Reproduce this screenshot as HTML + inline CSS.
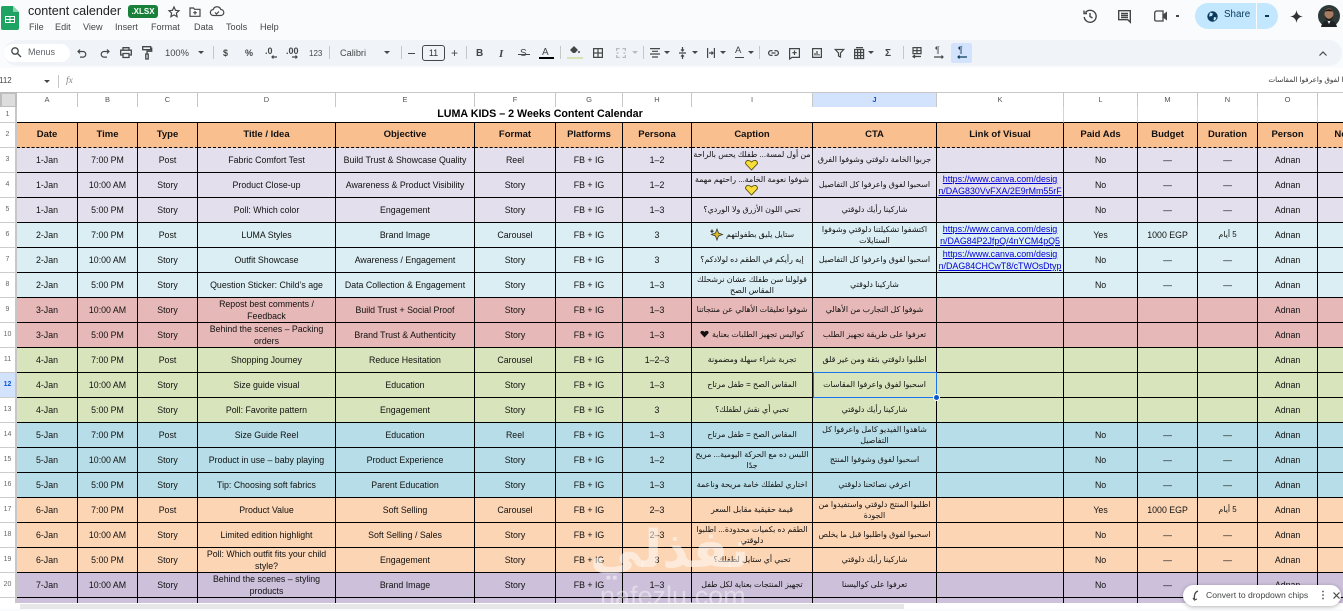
<!DOCTYPE html>
<html lang="en"><head><meta charset="utf-8"><title>content calender</title>
<style>
*{box-sizing:border-box}
html,body{margin:0;padding:0;width:1343px;height:609px;overflow:hidden;background:#f9fbfd;font-family:"Liberation Sans","Noto Sans CJK SC",sans-serif;color:#000}
.a{position:absolute}
.t{position:absolute;white-space:nowrap;color:#444746}
svg{position:absolute;overflow:visible}
svg.i{fill:none;stroke:#444746;stroke-width:1.2}
.sep{position:absolute;top:46px;width:1px;height:13px;background:#c7c7c7}
.ar{position:absolute;top:51px;width:0;height:0;border-left:3px solid transparent;border-right:3px solid transparent;border-top:3px solid #444746}
.ch{position:absolute;top:92px;height:16px;background:#fff;border-right:1px solid #c7c7c7;border-bottom:1px solid #c7c7c7;border-top:1px solid #c7c7c7;font-size:7.5px;color:#555;text-align:center;line-height:14px}
.rh{position:absolute;left:0;width:17px;height:25px;background:#fff;border-bottom:1px solid #ccc;border-right:2px solid #c7c7c7;font-size:7px;color:#666;text-align:center;line-height:24px}
#grid{position:absolute;left:17px;top:107px;width:1326px;height:496px;overflow:hidden;background:#fff}
table{border-collapse:separate;border-spacing:0;table-layout:fixed;width:1341px;font-family:"Liberation Sans","Noto Sans CJK SC",sans-serif}
td{padding:0;height:25px;border-right:1px solid #000;border-bottom:1px solid #000;text-align:center;vertical-align:middle;font-size:8.8px;line-height:12px;color:#111;overflow:hidden;white-space:nowrap}
tr.h td{background:#fabf8f;font-weight:bold;font-size:9.5px;border-bottom:1px dashed #000;color:#111}
tr.r1 td{height:16px;background:#fff;border-right:1px solid #d4d4d4;border-bottom:1px solid #000;line-height:15px}
td.ttl{font-weight:bold;font-size:10.7px;color:#000;border-right:1px solid #d4d4d4}
tr.l td{background:#e4dfec} tr.c td{background:#daeef3} tr.p td{background:#e6b8b7}
tr.g td{background:#d8e4bc} tr.b td{background:#b7dee8} tr.o td{background:#fcd5b4} tr.v td{background:#ccc0da}
td.ar2{direction:rtl;font-size:7.9px;line-height:11.5px;font-family:"Liberation Sans","DejaVu Sans",sans-serif}
td.lk{color:#0000d4;text-decoration:underline;font-size:8.9px;line-height:12px}
.em{display:inline-block;width:14px;height:10px;vertical-align:-2px;position:relative}
</style></head><body>

<!-- top bar -->
<svg style="left:1px;top:6px" width="18" height="24" viewBox="0 0 18 24"><path d="M2 0h10l6 6v16a2 2 0 0 1-2 2H2a2 2 0 0 1-2-2V2a2 2 0 0 1 2-2z" fill="#1ea362"/><path d="M12 0l6 6h-6z" fill="#8ed1b1"/><path d="M4 10h10v7H4z M5 11v2h3.5v-2z M9.5 11v2H13v-2z M5 14v2h3.5v-2z M9.5 14v2H13v-2z" fill="#fff" fill-rule="evenodd"/></svg>
<div class="t" style="left:28px;top:4px;font-size:12.6px;line-height:15px;color:#1f1f1f">content calender</div>
<div class="a" style="left:128px;top:5px;width:30px;height:13px;border-radius:3px;background:#188038;color:#fff;font-size:8px;font-weight:bold;text-align:center;line-height:14px">.XLSX</div>
<svg class="i" style="left:168px;top:6px" width="12" height="12" viewBox="0 0 12 12"><path d="M6 1l1.5 3.3 3.5.4-2.6 2.4.7 3.6L6 8.9l-3.1 1.8.7-3.6L1 4.7l3.5-.4z"/></svg>
<svg class="i" style="left:189px;top:7px" width="12" height="10" viewBox="0 0 12 10"><path d="M1 1h3.500l1 1.300H11v7H1z M6 4v3.500 M4.300 5.700h3.500"/></svg>
<svg class="i" style="left:210px;top:6px" width="14" height="11" viewBox="0 0 14 11"><path d="M3.500 9.500a3 3 0 0 1-.3-6 4 4 0 0 1 7.600 0 3 3 0 0 1 0 6z M5 6.500l1.500 1.500 2.500-2.500"/></svg>
<div class="t" style="left:29px;top:21px;font-size:9.1px;line-height:12px">File</div>
<div class="t" style="left:55px;top:21px;font-size:9.1px;line-height:12px">Edit</div>
<div class="t" style="left:83px;top:21px;font-size:9.1px;line-height:12px">View</div>
<div class="t" style="left:115px;top:21px;font-size:9.1px;line-height:12px">Insert</div>
<div class="t" style="left:151px;top:21px;font-size:9.1px;line-height:12px">Format</div>
<div class="t" style="left:194px;top:21px;font-size:9.1px;line-height:12px">Data</div>
<div class="t" style="left:226px;top:21px;font-size:9.1px;line-height:12px">Tools</div>
<div class="t" style="left:260px;top:21px;font-size:9.1px;line-height:12px">Help</div>

<svg class="i" style="left:1083px;top:9px;stroke-width:1.4" width="14" height="14" viewBox="0 0 14 14"><path d="M2.500 3.500A6 6 0 1 1 1.200 8 M1 1.500v3h3 M7 4v3.500l2.500 1.500"/></svg>
<svg class="i" style="left:1118px;top:10px;stroke-width:1.4" width="13" height="13" viewBox="0 0 13 13"><path d="M.7.700h11.600v11.500l-2.500-2.500H.7z M3 3.500h7 M3 5.500h7 M3 7.500h7"/></svg>
<svg class="i" style="left:1154px;top:10px;stroke-width:1.300" width="14" height="12" viewBox="0 0 14 12"><path d="M3 1h6v10H2a1.500 1.500 0 0 1-1.300-1.500V3A2 2 0 0 1 3 1z"/><path d="M9 4.500l4-3v9l-4-3z" fill="#444746" stroke="none"/></svg>
<div class="a" style="left:1176px;top:15px;width:3px;height:1.500px;background:#444746"></div>
<div class="a" style="left:1195px;top:3px;width:83px;height:26px;border-radius:13px;background:#c2e7ff"></div>
<div class="a" style="left:1256px;top:3px;width:1px;height:26px;background:#f9fbfd"></div>
<svg style="left:1207px;top:11px" width="11" height="11" viewBox="0 0 11 11"><circle cx="5.500" cy="5.500" r="5.200" fill="#0b3a5c"/><path d="M3 1.500l3 1-1 2.500-3 .5zM7 6l2.500.5L8 9.500 6.500 9z" fill="#c2e7ff"/></svg>
<div class="t" style="left:1224px;top:8px;font-size:9.800px;line-height:14px;color:#0b3a5c">Share</div>
<div class="a" style="left:1265px;top:15px;width:4px;height:2px;background:#0b3a5c"></div>
<svg style="left:1290px;top:10px" width="13" height="13" viewBox="0 0 13 13"><path d="M6.500 0C7 4 9 6 13 6.500 9 7 7 9 6.500 13 6 9 4 7 0 6.500 4 6 6 4 6.500 0z" fill="#333"/></svg>
<svg style="left:1318px;top:5px" width="22" height="22" viewBox="0 0 22 22"><circle cx="11" cy="11" r="11" fill="#2f3a38"/><ellipse cx="11" cy="9" rx="4.500" ry="5.500" fill="#a87c63"/><path d="M6.500 8C7 3 15 3 15.500 8L15 6.500C12 6 9 6 7 6.500z" fill="#1b1512"/><path d="M7 10c1 5 7 5 8 0l-.5 4-3.500 1.500L7.500 14z" fill="#221a16"/><path d="M3 22c1-5 4-6.500 8-6.500s7 1.500 8 6.500z" fill="#1c2225"/><path d="M9.500 16l1.500 3 1.500-3z" fill="#e8e8e8"/></svg>

<!-- toolbar -->
<div class="a" style="left:4px;top:40px;width:1338px;height:26px;border-radius:13px;background:#f0f4f9"></div>
<div class="a" style="left:4px;top:44px;width:66px;height:18px;border-radius:9px;background:#fff"></div>
<svg class="i" style="left:11px;top:47px;stroke-width:1.300" width="10" height="10" viewBox="0 0 10 10"><circle cx="4" cy="4" r="3.200"/><path d="M6.500 6.500L10 10"/></svg>
<div class="t" style="left:28px;top:46px;font-size:9px;line-height:13px;color:#5f6368">Menus</div>
<svg class="i" style="left:77px;top:49px" width="10" height="9" viewBox="0 0 10 9"><path d="M3 .5L1 2.500 3 4.500 M1 2.500h5a2.800 2.800 0 0 1 0 5.600H3"/></svg>
<svg class="i" style="left:100px;top:49px" width="10" height="9" viewBox="0 0 10 9"><path d="M7 .5l2 2-2 2 M9 2.500H4a2.800 2.800 0 0 0 0 5.600h3"/></svg>
<svg class="i" style="left:120px;top:47px;stroke-width:1.300" width="12" height="11" viewBox="0 0 12 11"><path d="M3 3V.7h6V3 M3 8H.7V3.200h10.600V8H9 M3 6.500h6v4H3z"/></svg>
<svg class="i" style="left:142px;top:46px;stroke-width:1.300" width="10" height="14" viewBox="0 0 10 14"><path d="M.7.700h8v3h-8z M8.700 2.200h1v3H5v2.500 M3.800 8h2.400v5H3.800z"/></svg>
<div class="t" style="left:165px;top:46px;font-size:9.400px;line-height:14px">100%</div>
<div class="ar" style="left:198px"></div><div class="sep" style="left:213px"></div>
<div class="t" style="left:223px;top:46px;font-size:9px;font-weight:bold;line-height:14px">$</div>
<div class="t" style="left:245px;top:46px;font-size:9px;font-weight:bold;line-height:14px">%</div>
<div class="t" style="left:265px;top:45px;font-size:9px;font-weight:bold;line-height:12px">.0</div>
<svg class="i" style="left:271px;top:55px" width="6" height="4" viewBox="0 0 6 4"><path d="M6 2H1M2.500.5L1 2l1.500 1.500"/></svg>
<div class="t" style="left:286px;top:45px;font-size:9px;font-weight:bold;line-height:12px">.00</div>
<svg class="i" style="left:292px;top:55px" width="6" height="4" viewBox="0 0 6 4"><path d="M0 2h5M3.500.5L5 2 3.500 3.500"/></svg>
<div class="t" style="left:309px;top:47px;font-size:8px;line-height:13px">123</div>
<div class="sep" style="left:329px"></div>
<div class="t" style="left:340px;top:46px;font-size:9.200px;line-height:14px">Calibri</div>
<div class="ar" style="left:384px"></div><div class="sep" style="left:401px"></div>
<div class="a" style="left:408px;top:53px;width:7px;height:1px;background:#444746"></div>
<div class="a" style="left:422px;top:45px;width:23px;height:16px;border:1px solid #444746;border-radius:3px;font-size:9px;text-align:center;line-height:14px;color:#333">11</div>
<div class="t" style="left:451px;top:46px;font-size:12px;line-height:14px">+</div>
<div class="sep" style="left:466px"></div>
<div class="t" style="left:476px;top:47px;font-size:10px;font-weight:bold;line-height:14px">B</div>
<div class="t" style="left:499px;top:47px;font-size:11px;font-style:italic;font-family:'Liberation Serif',serif;font-weight:bold;line-height:14px">I</div>
<div class="t" style="left:520px;top:47px;font-size:10px;line-height:14px">S</div><div class="a" style="left:518px;top:54px;width:12px;height:1px;background:#444746"></div>
<div class="t" style="left:542px;top:46px;font-size:10px;line-height:13px">A</div><div class="a" style="left:539px;top:57px;width:15px;height:2px;background:#000"></div>
<div class="sep" style="left:560px"></div>
<svg style="left:569px;top:45px" width="11" height="9" viewBox="0 0 11 9"><path d="M1 5l4-4 4 4-3 3H4z" fill="#444746"/><circle cx="10" cy="7" r="1" fill="#444746"/></svg>
<div class="a" style="left:567px;top:57px;width:16px;height:2px;background:#d6e3b5"></div>
<svg class="i" style="left:593px;top:48px;stroke-width:1.200" width="10" height="10" viewBox="0 0 10 10"><path d="M.6.6h8.800v8.800H.6z M5 .6v8.800 M.6 5h8.800"/></svg>
<svg class="i" style="left:616px;top:48px;stroke:#bbb" width="10" height="10" viewBox="0 0 10 10"><path d="M.6 3V.6h3 M6.400.6h3V3 M9.400 7v2.400h-3 M3.600 9.400h-3V7 M.6 5h2 M7.400 5h2"/></svg>
<div class="ar" style="left:632px;border-top-color:#bbb"></div><div class="sep" style="left:643px"></div>
<svg class="i" style="left:650px;top:48px" width="10" height="10" viewBox="0 0 10 10"><path d="M0 .6h10 M2 3.300h6 M0 6h10 M2 9h6"/></svg>
<div class="ar" style="left:664px"></div>
<svg class="i" style="left:679px;top:47px" width="7" height="12" viewBox="0 0 7 12"><path d="M0 6h7 M3.500 0v4 M2 2.500L3.500 4 5 2.500 M3.500 12V8 M2 9.500L3.500 8 5 9.500"/></svg>
<div class="ar" style="left:692px"></div>
<svg class="i" style="left:707px;top:48px" width="8" height="10" viewBox="0 0 8 10"><path d="M.6 0v10 M7.400 0v10 M2 5h4 M4.500 3.500L6 5 4.500 6.500"/></svg>
<div class="ar" style="left:720px"></div>
<div class="t" style="left:735px;top:45px;font-size:9.500px;line-height:12px">A</div><div class="a" style="left:735px;top:57px;width:9px;height:1px;background:#444746"></div>
<div class="ar" style="left:748px"></div><div class="sep" style="left:759px"></div>
<svg class="i" style="left:768px;top:50px;stroke-width:1.300" width="11" height="6" viewBox="0 0 11 6"><path d="M4.500.6H3a2.400 2.400 0 0 0 0 4.800h1.500 M6.500.6H8a2.400 2.400 0 0 1 0 4.800H6.500 M3.500 3h4"/></svg>
<svg class="i" style="left:789px;top:48px" width="11" height="11" viewBox="0 0 11 11"><path d="M.6.600h9.800v8.800H3L.6 11z M5.500 2.500v4.500 M3.300 4.700h4.400"/></svg>
<svg class="i" style="left:812px;top:48px" width="10" height="10" viewBox="0 0 10 10"><path d="M.6.600h8.800v8.800H.6z M3 7.500V5 M5 7.500V3 M7 7.500V6"/></svg>
<svg class="i" style="left:835px;top:49px" width="9" height="8" viewBox="0 0 9 8"><path d="M.3.500h8.400L5.500 4v4L3.500 7V4z"/></svg>
<svg class="i" style="left:854px;top:47px" width="10" height="12" viewBox="0 0 10 12"><path d="M2 .6h7 M.6 2.500v9h9v-9z M.6 5.500h9 M.6 8.500h9 M3.600 2.500v9 M6.600 2.500v9"/></svg>
<div class="ar" style="left:868px"></div>
<div class="t" style="left:885px;top:47px;font-size:10px;font-weight:bold;line-height:14px">Σ</div>
<div class="sep" style="left:903px"></div>
<svg class="i" style="left:912px;top:47px" width="10" height="12" viewBox="0 0 10 12"><path d="M1 .6h8v6H1z M5 .6v6 M1 3.600h8 M9 9.500H1 M3 8L1 9.500 3 11"/></svg>
<div class="t" style="left:935px;top:45px;font-size:9px;line-height:11px">¶</div>
<svg class="i" style="left:934px;top:55px" width="10" height="4" viewBox="0 0 10 4"><path d="M0 2h9M7.500.5L9 2 7.500 3.500"/></svg>
<div class="a" style="left:951px;top:43px;width:21px;height:20px;border-radius:2px;background:#d3e3fd"></div>
<div class="t" style="left:958px;top:45px;font-size:9px;line-height:11px;color:#0b3a5c">¶</div>
<svg class="i" style="left:957px;top:55px;stroke:#0b3a5c" width="10" height="4" viewBox="0 0 10 4"><path d="M10 2H1M2.500.5L1 2l1.500 1.500"/></svg>
<svg class="i" style="left:1319px;top:51px" width="8" height="5" viewBox="0 0 8 5"><path d="M.5 4.500L4 1l3.500 3.500"/></svg>

<!-- formula bar -->
<div class="a" style="left:0;top:68px;width:1343px;height:24px;background:#fff"></div>
<div class="t" style="left:-1px;top:75px;font-size:8px;line-height:12px">112</div>
<div class="ar" style="left:44px;top:80px"></div>
<div class="a" style="left:58px;top:75px;width:1px;height:13px;background:#c7c7c7"></div>
<div class="t" style="left:66px;top:75px;font-size:9.500px;line-height:12px;font-style:italic;font-family:'Liberation Serif',serif;color:#888">fx</div>
<div class="a" style="left:1230px;top:74px;width:113px;height:12px;overflow:hidden;direction:rtl;font-size:7.200px;line-height:12px;color:#333;white-space:nowrap;text-align:right;font-family:'Liberation Sans','DejaVu Sans',sans-serif"><span style="margin-right:-19px">اسحبوا لفوق واعرفوا المقاسات</span></div>

<!-- column headers -->
<div class="ch" style="left:0;width:17px;background:#ddd;border:2px solid #bdbdbd"></div>
<div class="ch" style="left:17px;width:61px">A</div><div class="ch" style="left:78px;width:60px">B</div><div class="ch" style="left:138px;width:60px">C</div><div class="ch" style="left:198px;width:138px">D</div><div class="ch" style="left:336px;width:139px">E</div><div class="ch" style="left:475px;width:81px">F</div><div class="ch" style="left:556px;width:67px">G</div><div class="ch" style="left:623px;width:69px">H</div><div class="ch" style="left:692px;width:121px">I</div><div class="ch" style="left:813px;width:124px;background:#d3e3fd;color:#0b57d0;font-weight:bold">J</div><div class="ch" style="left:937px;width:127px">K</div><div class="ch" style="left:1064px;width:74px">L</div><div class="ch" style="left:1138px;width:60px">M</div><div class="ch" style="left:1198px;width:60px">N</div><div class="ch" style="left:1258px;width:60px">O</div><div class="ch" style="left:1318px;width:60px">P</div>

<!-- row headers -->
<div class="rh" style="top:107px;height:16px;line-height:15px">1</div>
<div class="rh" style="top:123px">2</div><div class="rh" style="top:148px">3</div><div class="rh" style="top:173px">4</div><div class="rh" style="top:198px">5</div><div class="rh" style="top:223px">6</div><div class="rh" style="top:248px">7</div><div class="rh" style="top:273px">8</div><div class="rh" style="top:298px">9</div><div class="rh" style="top:323px">10</div><div class="rh" style="top:348px">11</div><div class="rh" style="top:373px;background:#d3e3fd;color:#0b57d0;font-weight:bold">12</div><div class="rh" style="top:398px">13</div><div class="rh" style="top:423px">14</div><div class="rh" style="top:448px">15</div><div class="rh" style="top:473px">16</div><div class="rh" style="top:498px">17</div><div class="rh" style="top:523px">18</div><div class="rh" style="top:548px">19</div><div class="rh" style="top:573px">20</div>
<div class="rh" style="top:598px;height:5px;border-bottom:0"></div>

<!-- sheet -->
<div id="grid"><table>
<colgroup><col style="width:61px"><col style="width:60px"><col style="width:60px"><col style="width:138px"><col style="width:139px"><col style="width:81px"><col style="width:67px"><col style="width:69px"><col style="width:121px"><col style="width:124px"><col style="width:127px"><col style="width:74px"><col style="width:60px"><col style="width:60px"><col style="width:60px"><col style="width:60px"></colgroup>
<tr class="r1"><td colspan="11" class="ttl">LUMA KIDS – 2 Weeks Content Calendar</td><td></td><td></td><td></td><td></td><td></td></tr>
<tr class="h"><td>Date</td><td>Time</td><td>Type</td><td>Title / Idea</td><td>Objective</td><td>Format</td><td>Platforms</td><td>Persona</td><td>Caption</td><td>CTA</td><td>Link of Visual</td><td>Paid Ads</td><td>Budget</td><td>Duration</td><td>Person</td><td>Notes</td></tr>
<tr class="l"><td>1-Jan</td><td>7:00 PM</td><td>Post</td><td>Fabric Comfort Test</td><td>Build Trust &amp; Showcase Quality</td><td>Reel</td><td>FB + IG</td><td>1–2</td><td class="ar2">من أول لمسة... طفلك يحس بالراحة<br><span class="em"><svg width="13" height="10" viewBox="0 0 13 10" style="left:0;top:0"><path d="M6.500 10L.8 4A2.500 2.500 0 0 1 3.500.5c1.500 0 2.500 1 3 1.500.5-.5 1.500-1.500 3-1.500A2.500 2.500 0 0 1 12.200 4z" fill="#f7dc3b" stroke="#4b4200" stroke-width=".8"/></svg></span></td><td class="ar2">جربوا الخامة دلوقتي وشوفوا الفرق</td><td></td><td>No</td><td>—</td><td>—</td><td>Adnan</td><td></td></tr>
<tr class="l"><td>1-Jan</td><td>10:00 AM</td><td>Story</td><td>Product Close-up</td><td>Awareness &amp; Product Visibility</td><td>Story</td><td>FB + IG</td><td>1–2</td><td class="ar2">شوفوا نعومة الخامة... راحتهم مهمة<br><span class="em"><svg width="13" height="10" viewBox="0 0 13 10" style="left:0;top:0"><path d="M6.500 10L.8 4A2.500 2.500 0 0 1 3.500.5c1.500 0 2.500 1 3 1.500.5-.5 1.500-1.500 3-1.500A2.500 2.500 0 0 1 12.200 4z" fill="#f7dc3b" stroke="#4b4200" stroke-width=".8"/></svg></span></td><td class="ar2">اسحبوا لفوق واعرفوا كل التفاصيل</td><td class="lk">https://www.canva.com/desig<br>n/DAG830VvFXA/2E9rMm55rF</td><td>No</td><td>—</td><td>—</td><td>Adnan</td><td></td></tr>
<tr class="l"><td>1-Jan</td><td>5:00 PM</td><td>Story</td><td>Poll: Which color</td><td>Engagement</td><td>Story</td><td>FB + IG</td><td>1–3</td><td class="ar2">تحبي اللون الأزرق ولا الوردي؟</td><td class="ar2">شاركينا رأيك دلوقتي</td><td></td><td>No</td><td>—</td><td>—</td><td>Adnan</td><td></td></tr>
<tr class="c"><td>2-Jan</td><td>7:00 PM</td><td>Post</td><td>LUMA Styles</td><td>Brand Image</td><td>Carousel</td><td>FB + IG</td><td>3</td><td class="ar2">ستايل يليق بطفولتهم <span class="em"><svg width="13" height="11" viewBox="0 0 13 11" style="left:0;top:0"><path d="M7 0l1.500 4 4 1.500-4 1.500L7 11 5.500 7l-4-1.500 4-1.500z" fill="#d9b92a" stroke="#333" stroke-width=".8"/><path d="M2 0l.8 1.500L4 2.200 2.800 3 2 4.500 1.200 3 0 2.200 1.200 1.500z" fill="#333"/></svg></span></td><td class="ar2">اكتشفوا تشكيلتنا دلوقتي وشوفوا<br>الستايلات</td><td class="lk">https://www.canva.com/desig<br>n/DAG84P2JfpQ/4nYCM4pQ5</td><td>Yes</td><td>1000 EGP</td><td class="ar2">5 أيام</td><td>Adnan</td><td></td></tr>
<tr class="c"><td>2-Jan</td><td>10:00 AM</td><td>Story</td><td>Outfit Showcase</td><td>Awareness / Engagement</td><td>Story</td><td>FB + IG</td><td>3</td><td class="ar2">إيه رأيكم في الطقم ده لولادكم؟</td><td class="ar2">اسحبوا لفوق واعرفوا كل التفاصيل</td><td class="lk">https://www.canva.com/desig<br>n/DAG84CHCwT8/cTWOsDtyp</td><td>No</td><td>—</td><td>—</td><td>Adnan</td><td></td></tr>
<tr class="c"><td>2-Jan</td><td>5:00 PM</td><td>Story</td><td>Question Sticker: Child’s age</td><td>Data Collection &amp; Engagement</td><td>Story</td><td>FB + IG</td><td>1–3</td><td class="ar2">قولولنا سن طفلك عشان نرشحلك<br>المقاس الصح</td><td class="ar2">شاركينا دلوقتي</td><td></td><td>No</td><td>—</td><td>—</td><td>Adnan</td><td></td></tr>
<tr class="p"><td>3-Jan</td><td>10:00 AM</td><td>Story</td><td>Repost best comments /<br>Feedback</td><td>Build Trust + Social Proof</td><td>Story</td><td>FB + IG</td><td>1–3</td><td class="ar2">شوفوا تعليقات الأهالي عن منتجاتنا</td><td class="ar2">شوفوا كل التجارب من الأهالي</td><td></td><td></td><td></td><td></td><td>Adnan</td><td></td></tr>
<tr class="p"><td>3-Jan</td><td>5:00 PM</td><td>Story</td><td>Behind the scenes – Packing<br>orders</td><td>Brand Trust &amp; Authenticity</td><td>Story</td><td>FB + IG</td><td>1–3</td><td class="ar2">كواليس تجهيز الطلبات بعناية <span class="em" style="width:10px"><svg width="9" height="8" viewBox="0 0 13 10" style="left:0;top:1px"><path d="M6.500 10L.8 4A2.500 2.500 0 0 1 3.500.5c1.500 0 2.500 1 3 1.500.5-.5 1.500-1.500 3-1.500A2.500 2.500 0 0 1 12.200 4z" fill="#111"/></svg></span></td><td class="ar2">تعرفوا على طريقة تجهيز الطلب</td><td></td><td></td><td></td><td></td><td>Adnan</td><td></td></tr>
<tr class="g"><td>4-Jan</td><td>7:00 PM</td><td>Post</td><td>Shopping Journey</td><td>Reduce Hesitation</td><td>Carousel</td><td>FB + IG</td><td>1–2–3</td><td class="ar2">تجربة شراء سهلة ومضمونة</td><td class="ar2">اطلبوا دلوقتي بثقة ومن غير قلق</td><td></td><td></td><td></td><td></td><td>Adnan</td><td></td></tr>
<tr class="g"><td>4-Jan</td><td>10:00 AM</td><td>Story</td><td>Size guide visual</td><td>Education</td><td>Story</td><td>FB + IG</td><td>1–3</td><td class="ar2">المقاس الصح = طفل مرتاح</td><td class="ar2">اسحبوا لفوق واعرفوا المقاسات</td><td></td><td></td><td></td><td></td><td>Adnan</td><td></td></tr>
<tr class="g"><td>4-Jan</td><td>5:00 PM</td><td>Story</td><td>Poll: Favorite pattern</td><td>Engagement</td><td>Story</td><td>FB + IG</td><td>3</td><td class="ar2">تحبي أي نقش لطفلك؟</td><td class="ar2">شاركينا رأيك دلوقتي</td><td></td><td></td><td></td><td></td><td>Adnan</td><td></td></tr>
<tr class="b"><td>5-Jan</td><td>7:00 PM</td><td>Post</td><td>Size Guide Reel</td><td>Education</td><td>Reel</td><td>FB + IG</td><td>1–3</td><td class="ar2">المقاس الصح = طفل مرتاح</td><td class="ar2">شاهدوا الفيديو كامل واعرفوا كل<br>التفاصيل</td><td></td><td>No</td><td>—</td><td>—</td><td>Adnan</td><td></td></tr>
<tr class="b"><td>5-Jan</td><td>10:00 AM</td><td>Story</td><td>Product in use – baby playing</td><td>Product Experience</td><td>Story</td><td>FB + IG</td><td>1–2</td><td class="ar2">اللبس ده مع الحركة اليومية... مريح<br>جدًا</td><td class="ar2">اسحبوا لفوق وشوفوا المنتج</td><td></td><td>No</td><td>—</td><td>—</td><td>Adnan</td><td></td></tr>
<tr class="b"><td>5-Jan</td><td>5:00 PM</td><td>Story</td><td>Tip: Choosing soft fabrics</td><td>Parent Education</td><td>Story</td><td>FB + IG</td><td>1–3</td><td class="ar2">اختاري لطفلك خامة مريحة وناعمة</td><td class="ar2">اعرفي نصائحنا دلوقتي</td><td></td><td>No</td><td>—</td><td>—</td><td>Adnan</td><td></td></tr>
<tr class="o"><td>6-Jan</td><td>7:00 PM</td><td>Post</td><td>Product Value</td><td>Soft Selling</td><td>Carousel</td><td>FB + IG</td><td>2–3</td><td class="ar2">قيمة حقيقية مقابل السعر</td><td class="ar2">اطلبوا المنتج دلوقتي واستفيدوا من<br>الجودة</td><td></td><td>Yes</td><td>1000 EGP</td><td class="ar2">5 أيام</td><td>Adnan</td><td></td></tr>
<tr class="o"><td>6-Jan</td><td>10:00 AM</td><td>Story</td><td>Limited edition highlight</td><td>Soft Selling / Sales</td><td>Story</td><td>FB + IG</td><td>2–3</td><td class="ar2">الطقم ده بكميات محدودة... اطلبوا<br>دلوقتي</td><td class="ar2">اسحبوا لفوق واطلبوا قبل ما يخلص</td><td></td><td>No</td><td>—</td><td>—</td><td>Adnan</td><td></td></tr>
<tr class="o"><td>6-Jan</td><td>5:00 PM</td><td>Story</td><td>Poll: Which outfit fits your child<br>style?</td><td>Engagement</td><td>Story</td><td>FB + IG</td><td>3</td><td class="ar2">تحبي أي ستايل لطفلك؟</td><td class="ar2">شاركينا رأيك دلوقتي</td><td></td><td>No</td><td>—</td><td>—</td><td>Adnan</td><td></td></tr>
<tr class="v"><td>7-Jan</td><td>10:00 AM</td><td>Story</td><td>Behind the scenes – styling<br>products</td><td>Brand Image</td><td>Story</td><td>FB + IG</td><td>1–3</td><td class="ar2">تجهيز المنتجات بعناية لكل طفل</td><td class="ar2">تعرفوا على كواليسنا</td><td></td><td>No</td><td>—</td><td>—</td><td>Adnan</td><td></td></tr>
<tr class="v"><td></td><td></td><td></td><td></td><td></td><td></td><td></td><td></td><td></td><td></td><td></td><td></td><td></td><td></td><td></td><td></td></tr>
</table></div>

<!-- selection -->
<div class="a" style="left:813px;top:372px;width:124px;height:26px;border:1px solid #1a73e8"></div>
<div class="a" style="left:933px;top:394px;width:7px;height:7px;border-radius:50%;background:#0b57d0;border:1px solid #fff"></div>

<!-- watermark -->
<div class="a" style="left:590px;top:520px;width:150px;font-size:52px;line-height:60px;font-weight:bold;color:rgba(255,255,255,.5);text-align:center;white-space:nowrap;font-family:'Liberation Sans','DejaVu Sans',sans-serif">نفذلي</div>
<div class="a" style="left:600px;top:581px;font-size:27px;line-height:30px;color:rgba(255,255,255,.42);white-space:nowrap">nafezlu.com</div>

<!-- bottom scrollbar -->
<div class="a" style="left:0;top:603px;width:1343px;height:6px;background:#fff"></div>
<div class="a" style="left:20px;top:604px;width:884px;height:5px;background:#e6e6e6"></div>

<!-- toast -->
<div class="a" style="left:1183px;top:585px;width:158px;height:21px;border-radius:11px;background:#fff;box-shadow:0 1px 4px rgba(0,0,0,.3)"></div>
<svg class="i" style="left:1193px;top:590px" width="7" height="11" viewBox="0 0 7 11"><path d="M5 1C2 2 1 5 1.500 9 M0 8l1.500 2L4 9"/></svg>
<div class="t" style="left:1206px;top:589px;font-size:8.600px;line-height:13px">Convert to dropdown chips</div>
<div class="t" style="left:1318px;top:589px;font-size:10px;line-height:13px;font-weight:bold">⋮</div>
<svg class="i" style="left:1333px;top:592px" width="7" height="7" viewBox="0 0 7 7"><path d="M.5.500l6 6M6.500.500l-6 6"/></svg>
</body></html>
